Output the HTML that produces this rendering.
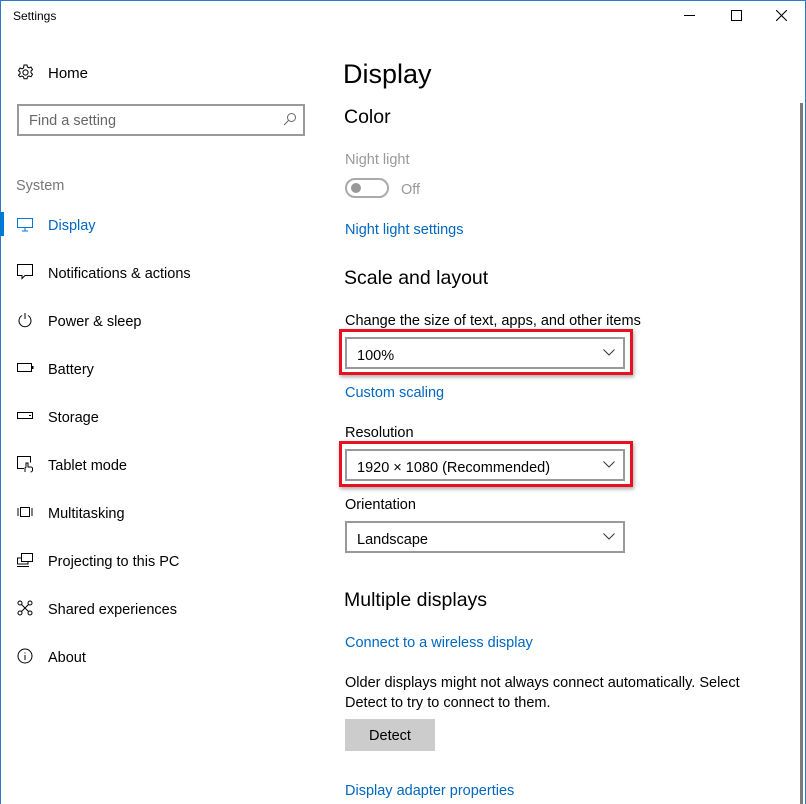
<!DOCTYPE html>
<html><head><meta charset="utf-8"><style>
*{margin:0;padding:0;box-sizing:border-box}
body{width:806px;height:804px;background:#fff;font-family:"Liberation Sans",sans-serif;color:#000;position:relative;overflow:hidden;font-size:14.5px}
.a{position:absolute;white-space:nowrap;line-height:1}
.win{position:absolute;left:0;top:0;width:806px;height:804px;border:1px solid #2b79c9;border-bottom:none}
.nav{position:absolute;left:48px;font-size:14.5px}
.ic{position:absolute;left:17px}
.blue{color:#0067c0}
.dd{position:absolute;left:345px;width:280px;height:32px;border:2px solid #999;background:#fff}
.dd span{position:absolute;left:10px;top:9px;font-size:14.5px}
.dd svg{position:absolute;right:8px;top:10px}
.red{position:absolute;left:339px;width:294px;border:3px solid #e81123;box-shadow:1px 2px 4px rgba(0,0,0,.35)}
</style></head><body>
<div class="win"></div>
<div class="a" style="left:13px;top:10px;font-size:12px">Settings</div>
<svg class="a" style="left:684px;top:15px" width="12" height="2"><rect width="11" height="1" fill="#000"/></svg>
<svg class="a" style="left:731px;top:10px" width="11" height="11"><rect x=".5" y=".5" width="10" height="10" fill="none" stroke="#000"/></svg>
<svg class="a" style="left:776px;top:10px" width="11" height="11"><path d="M0 0L11 11M11 0L0 11" stroke="#000" stroke-width="1.1"/></svg>
<div class="a" style="left:800px;top:103px;width:3px;height:701px;background:#7a7a7a"></div>

<svg class="ic" style="top:64px" width="17" height="17" viewBox="0 0 17 17"><circle cx="8.5" cy="8.5" r="2.6" fill="none" stroke="#000"/><path d="M7 1h3l.5 2 1.5.8 2-.8 1.5 2.6-1.5 1.4v1.8l1.5 1.4-1.5 2.6-2-.8-1.5.8-.5 2h-3l-.5-2-1.5-.8-2 .8L1.5 11.2 3 9.8V8L1.5 6.6 3 4l2 .8L6.5 4z" fill="none" stroke="#000"/></svg>
<div class="a" style="left:48px;top:66px;font-size:15px">Home</div>
<div class="a" style="left:17px;top:104px;width:288px;height:32px;border:2px solid #999"></div>
<div class="a" style="left:29px;top:114px;color:#666">Find a setting</div>
<svg class="a" style="left:283px;top:112px" width="14" height="14"><circle cx="8.5" cy="5.5" r="4" fill="none" stroke="#666"/><path d="M5.6 8.4L1 13" stroke="#666"/></svg>
<div class="a" style="left:16px;top:179px;color:#777">System</div>

<div class="a" style="left:0;top:212px;width:4px;height:24px;background:#0078d7"></div>
<svg class="ic" style="top:218px" width="17" height="14"><rect x=".5" y=".5" width="15" height="9" fill="none" stroke="#0078d7"/><path d="M8 10v3M5 13h6" stroke="#0078d7"/></svg>
<div class="a nav blue" style="top:219px">Display</div>
<svg class="ic" style="top:264px" width="17" height="17"><path d="M.5 .5h15v11H8l-3 3v-3H.5z" fill="none" stroke="#000"/></svg>
<div class="a nav" style="top:267px">Notifications &amp; actions</div>
<svg class="ic" style="top:312px" width="17" height="17"><path d="M5 3.5A6 6 0 1 0 11 3.5M8 1v6" fill="none" stroke="#000"/></svg>
<div class="a nav" style="top:315px">Power &amp; sleep</div>
<svg class="ic" style="top:363px" width="17" height="10"><rect x=".5" y=".5" width="14" height="8" fill="none" stroke="#000"/><rect x="15" y="3" width="1.5" height="3"/></svg>
<div class="a nav" style="top:363px">Battery</div>
<svg class="ic" style="top:412px" width="17" height="8"><rect x=".5" y=".5" width="15" height="6" fill="none" stroke="#000"/><rect x="12" y="3" width="2" height="1"/></svg>
<div class="a nav" style="top:411px">Storage</div>
<svg class="ic" style="top:456px" width="17" height="17"><path d="M7 12.5H.5V.5h13v6" fill="none" stroke="#000"/><path d="M8 16v-4l1-1V7h2v4h3a1.5 1.5 0 0 1 1.5 1.5V14a2 2 0 0 1-2 2" fill="none" stroke="#000"/></svg>
<div class="a nav" style="top:459px">Tablet mode</div>
<svg class="ic" style="top:507px" width="17" height="11"><rect x="3.5" y=".5" width="9" height="9" fill="none" stroke="#000"/><path d="M1 1v8M15 1v8" stroke="#000"/></svg>
<div class="a nav" style="top:507px">Multitasking</div>
<svg class="ic" style="top:553px" width="17" height="15"><rect x="4.5" y=".5" width="11" height="8" fill="none" stroke="#000"/><path d="M4 5H.5v6H11V9M0 13.5h12" fill="none" stroke="#000"/></svg>
<div class="a nav" style="top:555px">Projecting to this PC</div>
<svg class="ic" style="top:600px" width="17" height="17"><circle cx="3" cy="3" r="2" fill="none" stroke="#000"/><circle cx="13" cy="3" r="2" fill="none" stroke="#000"/><circle cx="3" cy="13" r="2" fill="none" stroke="#000"/><circle cx="13" cy="13" r="2" fill="none" stroke="#000"/><path d="M4.5 4.5l7 7M11.5 4.5l-7 7" stroke="#000"/></svg>
<div class="a nav" style="top:603px">Shared experiences</div>
<svg class="ic" style="top:648px" width="17" height="17"><circle cx="8" cy="8" r="7" fill="none" stroke="#000"/><path d="M8 7v5M8 4.5v1" stroke="#000"/></svg>
<div class="a nav" style="top:651px">About</div>

<div class="a" style="left:343px;top:61px;font-size:27px">Display</div>
<div class="a" style="left:344px;top:108px;font-size:19.5px">Color</div>
<div class="a" style="left:345px;top:153px;color:#999">Night light</div>
<div class="a" style="left:345px;top:178px;width:44px;height:20px;border:2px solid #aaa;border-radius:10px"></div>
<div class="a" style="left:351px;top:183px;width:10px;height:10px;border-radius:5px;background:#999"></div>
<div class="a" style="left:401px;top:183px;color:#999">Off</div>
<div class="a blue" style="left:345px;top:223px">Night light settings</div>
<div class="a" style="left:344px;top:269px;font-size:19.5px">Scale and layout</div>
<div class="a" style="left:345px;top:314px">Change the size of text, apps, and other items</div>
<div class="red" style="top:329px;height:46px"></div>
<div class="dd" style="top:337px"><span>100%</span><svg width="12" height="7"><path d="M.5.5L6 6 11.5.5" fill="none" stroke="#333"/></svg></div>
<div class="a blue" style="left:345px;top:386px">Custom scaling</div>
<div class="a" style="left:345px;top:426px">Resolution</div>
<div class="red" style="top:441px;height:46px"></div>
<div class="dd" style="top:449px"><span>1920 × 1080 (Recommended)</span><svg width="12" height="7"><path d="M.5.5L6 6 11.5.5" fill="none" stroke="#333"/></svg></div>
<div class="a" style="left:345px;top:498px">Orientation</div>
<div class="dd" style="top:521px"><span>Landscape</span><svg width="12" height="7"><path d="M.5.5L6 6 11.5.5" fill="none" stroke="#333"/></svg></div>
<div class="a" style="left:344px;top:591px;font-size:19.5px">Multiple displays</div>
<div class="a blue" style="left:345px;top:636px">Connect to a wireless display</div>
<div class="a" style="left:345px;top:676px">Older displays might not always connect automatically. Select</div>
<div class="a" style="left:345px;top:696px">Detect to try to connect to them.</div>
<div class="a" style="left:345px;top:719px;width:90px;height:32px;background:#ccc"></div>
<div class="a" style="left:345px;top:729px;width:90px;text-align:center">Detect</div>
<div class="a blue" style="left:345px;top:784px">Display adapter properties</div>
</body></html>
